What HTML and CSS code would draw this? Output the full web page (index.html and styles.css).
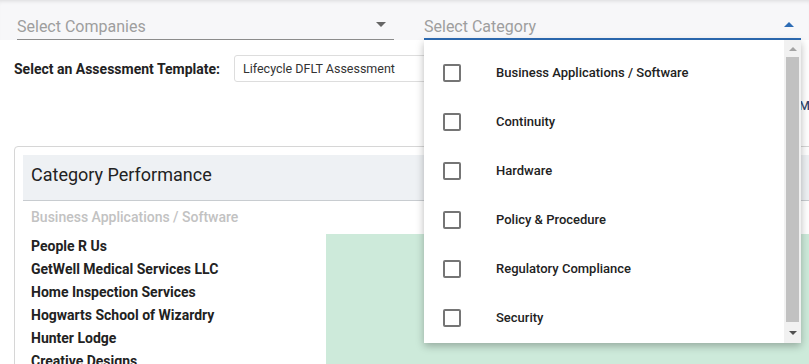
FILE: index.html
```html
<!DOCTYPE html>
<html lang="en">
<head>
    <meta charset="UTF-8">
    <meta name="viewport" content="width=device-width, initial-scale=1.0">
    <title>Category Performance</title>
    <link rel="stylesheet" href="styles.css">
</head>
<body>
    <div class="filter-bar">
        <div class="md-select">
            <span class="placeholder">Select Companies</span>
            <span class="caret"></span>
        </div>
        <div class="md-select open">
            <span class="placeholder">Select Category</span>
            <span class="caret up"></span>

            <div class="dropdown">
                <ul class="option-list">
                    <li><span class="checkbox"></span>Business Applications / Software</li>
                    <li><span class="checkbox"></span>Continuity</li>
                    <li><span class="checkbox"></span>Hardware</li>
                    <li><span class="checkbox"></span>Policy &amp; Procedure</li>
                    <li><span class="checkbox"></span>Regulatory Compliance</li>
                    <li><span class="checkbox"></span>Security</li>
                </ul>
                <div class="scrollbar">
                    <span class="arrow-up"></span>
                    <div class="thumb"></div>
                    <span class="arrow-down"></span>
                </div>
            </div>
        </div>
    </div>

    <div class="page">
        <div class="template-row">
            <label>Select an Assessment Template:</label>
            <div class="template-select">Lifecycle DFLT Assessment</div>
        </div>

        <div class="link-row">
            <a href="#">VIEW FULL FORM</a>
        </div>

        <div class="card">
            <div class="card-header">Category Performance</div>
            <div class="card-body">
                <div class="subtitle">Business Applications / Software</div>
                <div class="perf-row">
                    <ul class="company-list">
                        <li>People R Us</li>
                        <li>GetWell Medical Services LLC</li>
                        <li>Home Inspection Services</li>
                        <li>Hogwarts School of Wizardry</li>
                        <li>Hunter Lodge</li>
                        <li>Creative Designs</li>
                    </ul>
                    <div class="chart"></div>
                </div>
            </div>
        </div>
    </div>
</body>
</html>
```

FILE: styles.css
```css
html, body {
    margin: 0;
    padding: 0;
    height: 364px;
    overflow: hidden;
}
body {
    font-family: Roboto, "Liberation Sans", sans-serif;
    color: #222;
    background-color: #fff;
    width: 809px;
}
.filter-bar {
    display: flex;
    gap: 30px;
    height: 40px;
    padding-left: 17px;
    background-color: #f7f7f9;
    box-shadow: inset 0 4px 4px -3px rgba(0, 0, 0, 0.12);
    position: relative;
    z-index: 5;
}
.md-select {
    position: relative;
    width: 377px;
    height: 39px;
    border-bottom: 1px solid #8c8c8c;
    display: flex;
    align-items: flex-end;
}
.md-select.open {
    height: 38px;
    border-bottom: 2px solid #2d6cb5;
}
.placeholder {
    font-size: 16px;
    line-height: 20px;
    color: #9e9e9e;
    padding-bottom: 2px;
}
.md-select.open .placeholder {
    padding-bottom: 1px;
}
.caret {
    position: absolute;
    right: 8px;
    top: 22px;
    width: 0;
    height: 0;
    border-left: 5px solid transparent;
    border-right: 5px solid transparent;
    border-top: 5px solid #666;
}
.caret.up {
    right: 7px;
    border-top: none;
    border-bottom: 5px solid #2d6cb5;
}
.dropdown {
    position: absolute;
    top: 40px;
    left: 0;
    width: 377px;
    height: 303px;
    background-color: #fff;
    box-shadow: 0 3px 8px rgba(0, 0, 0, 0.28);
    display: flex;
}
.option-list {
    list-style: none;
    margin: 0;
    padding: 8px 0 0;
    flex: 1;
}
.option-list li {
    display: flex;
    align-items: center;
    height: 49px;
    padding-left: 19px;
    font-size: 13px;
    font-weight: 500;
    color: #222;
}
.checkbox {
    width: 14px;
    height: 14px;
    border: 2px solid #757575;
    border-radius: 2px;
    margin-right: 35px;
}
.scrollbar {
    width: 17px;
    background-color: #f1f1f1;
    display: flex;
    flex-direction: column;
    align-items: center;
}
.arrow-up {
    width: 0;
    height: 0;
    margin: 7px 0 6px;
    border-left: 4px solid transparent;
    border-right: 4px solid transparent;
    border-bottom: 4px solid #a3a3a3;
}
.thumb {
    width: 13px;
    height: 265px;
    background-color: #c1c1c1;
}
.arrow-down {
    width: 0;
    height: 0;
    margin-top: 9px;
    border-left: 4px solid transparent;
    border-right: 4px solid transparent;
    border-top: 4px solid #505050;
}
.page {
    width: 1100px;
    padding: 15px 0 0 14px;
}
.template-row {
    display: flex;
    align-items: center;
    gap: 14px;
}
.template-row label {
    font-size: 14px;
    font-weight: 700;
    color: #222;
    width: 206px;
}
.template-select {
    width: 300px;
    height: 25px;
    line-height: 26px;
    border: 1px solid #ddd;
    border-radius: 3px;
    padding-left: 8px;
    font-size: 12.5px;
    color: #333;
}
.link-row {
    width: 796px;
    display: flex;
    justify-content: flex-end;
    margin-top: 16px;
    height: 20px;
}
.link-row a {
    font-size: 13px;
    font-weight: 500;
    color: #34466e;
    text-decoration: none;
}
.card {
    margin-top: 28px;
    width: 1000px;
    border: 1px solid #d6d6d6;
    border-radius: 4px;
    padding: 8px;
}
.card-header {
    height: 45px;
    line-height: 40px;
    padding-left: 8px;
    font-size: 18px;
    color: #222;
    background-color: #eef1f4;
    border-bottom: 1px solid #c8ccd0;
}
.card-body {
    padding: 6px 8px 0;
}
.subtitle {
    font-size: 14px;
    font-weight: 500;
    line-height: 20px;
    color: #c2c2c2;
}
.perf-row {
    display: grid;
    grid-template-columns: 295px 1fr;
    margin-top: 7px;
}
.company-list {
    list-style: none;
    margin: 1px 0 0;
    padding: 0;
}
.company-list li {
    font-size: 14px;
    font-weight: 700;
    line-height: 23px;
    color: #222;
}
.chart {
    background-color: #cdeada;
}
```
